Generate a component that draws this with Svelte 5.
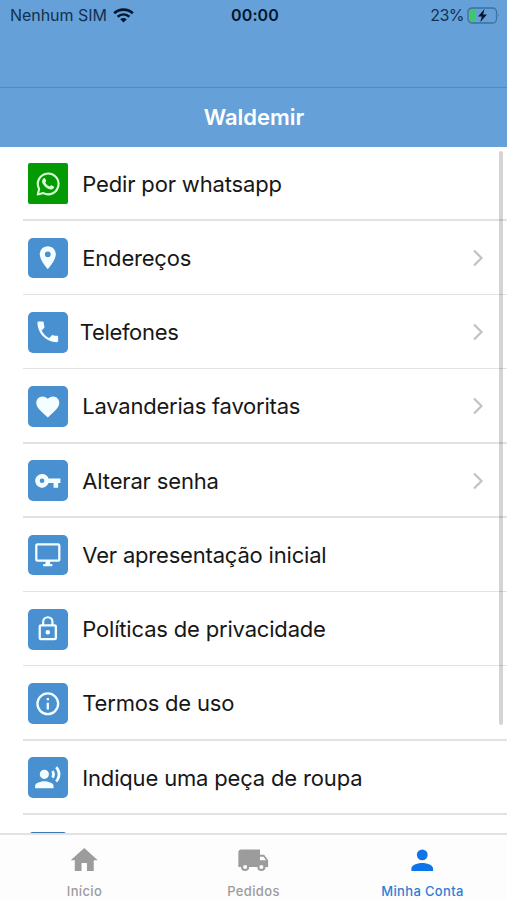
<script>
  const rows = [
    { icon: 'whatsapp', label: 'Pedir por whatsapp', spacing: -0.16 },
    { icon: 'place', label: 'Endereços', link: true, spacing: -0.2 },
    { icon: 'phone', label: 'Telefones', link: true, spacing: -0.33, shift: -2.5 },
    { icon: 'heart', label: 'Lavanderias favoritas', link: true, spacing: -0.23 },
    { icon: 'key', label: 'Alterar senha', link: true, spacing: -0.16 },
    { icon: 'monitor', label: 'Ver apresentação inicial', spacing: -0.19 },
    { icon: 'lock', label: 'Políticas de privacidade', spacing: -0.18 },
    { icon: 'info', label: 'Termos de uso', spacing: -0.2 },
    { icon: 'voice', label: 'Indique uma peça de roupa', spacing: -0.17 },
    { icon: 'blank', label: '', spacing: 0 }
  ];
  const paths = {
    place: 'M12 2C8.13 2 5 5.13 5 9c0 5.25 7 13 7 13s7-7.75 7-13c0-3.87-3.13-7-7-7zm0 9.5a2.5 2.5 0 1 1 0-5 2.5 2.5 0 0 1 0 5z',
    phone: 'M6.62 10.79c1.44 2.83 3.76 5.14 6.59 6.59l2.2-2.2c.27-.27.67-.36 1.02-.24 1.12.37 2.33.57 3.57.57.55 0 1 .45 1 1V20c0 .55-.45 1-1 1C10.61 21 3 13.39 3 4c0-.55.45-1 1-1h3.5c.55 0 1 .45 1 1 0 1.25.2 2.45.57 3.57.11.35.03.74-.25 1.02l-2.2 2.2z',
    heart: 'M12 21.35l-1.45-1.32C5.4 15.36 2 12.28 2 8.5 2 5.42 4.42 3 7.5 3c1.74 0 3.41.81 4.5 2.09C13.09 3.81 14.76 3 16.5 3 19.58 3 22 5.42 22 8.5c0 3.78-3.4 6.86-8.55 11.54L12 21.35z',
    key: 'M12.65 10A5.99 5.99 0 0 0 7 6a6 6 0 1 0 5.65 8H17v4h4v-4h2v-4H12.65zM7 14a2 2 0 1 1 0-4 2 2 0 0 1 0 4z',
    monitor: 'M21 2H3c-1.1 0-2 .9-2 2v12c0 1.1.9 2 2 2h7v2H8v2h8v-2h-2v-2h7c1.1 0 2-.9 2-2V4c0-1.1-.9-2-2-2zm0 14H3V4h18v12z',
    lock: 'M18 8h-1V6A5 5 0 0 0 7 6v2H6a2 2 0 0 0-2 2v10a2 2 0 0 0 2 2h12a2 2 0 0 0 2-2V10a2 2 0 0 0-2-2zM8.9 6a3.1 3.1 0 0 1 6.2 0v2H8.9V6zM18 20H6V10h12v10zm-6-3a2 2 0 1 0 0-4 2 2 0 0 0 0 4z',
    info: 'M11 17h2v-6h-2v6zm1-15a10 10 0 1 0 0 20 10 10 0 0 0 0-20zm0 18a8 8 0 1 1 0-16 8 8 0 0 1 0 16zM11 9h2V7h-2v2z',
    voice: 'M9 5a4 4 0 1 0 0 8 4 4 0 0 0 0-8zm0 10c-2.67 0-8 1.34-8 4v2h16v-2c0-2.66-5.33-4-8-4zm7.76-9.64l-1.68 1.69c.84 1.18.84 2.71 0 3.89l1.68 1.69c2.02-2.02 2.02-5.07 0-7.27zM20.07 2l-1.63 1.63c2.77 3.02 2.77 7.56 0 10.74L20.07 16c3.9-3.89 3.91-9.95 0-14z',
    home: 'M10 20v-6h4v6h5v-8h3L12 3 2 12h3v8z',
    truck: 'M17 8V4H3c-1.1 0-2 .9-2 2v11h2a3 3 0 0 0 6 0h6a3 3 0 0 0 6 0h2v-5l-3-4h-3zM6 18.5a1.5 1.5 0 1 1 0-3 1.5 1.5 0 0 1 0 3zm13.5-9l1.96 2.5H17V9.5h2.5zM18 18.5a1.5 1.5 0 1 1 0-3 1.5 1.5 0 0 1 0 3z',
    person: 'M12 12a4 4 0 1 0 0-8 4 4 0 0 0 0 8zm0 2c-2.67 0-8 1.34-8 4v2h16v-2c0-2.66-5.33-4-8-4z'
  };
  const tabs = [
    { icon: 'home', label: 'Início' },
    { icon: 'truck', label: 'Pedidos' },
    { icon: 'person', label: 'Minha Conta', active: true }
  ];
</script>

<div class="screen">
  <header>
    <div class="status">
      <div class="carrier">
        <span>Nenhum SIM</span>
        <svg width="21" height="15" viewBox="0 0 21 15" fill="none" stroke="#04152b">
          <path d="M1.200 5.200C6.500 .4 14.500 .4 19.800 5.200" stroke-width="2.700" />
          <path d="M4.600 8.700c3.500-3 8.300-3 11.800 0" stroke-width="2.500" />
          <path d="M7.200 11.300q3.300-2.600 6.600 0L10.500 14.600z" fill="#04152b" stroke="none" />
        </svg>
      </div>
      <b>00:00</b>
      <div class="battery">
        <span>23%</span>
        <svg width="33" height="17" viewBox="0 0 33 17">
          <rect x="1" y="1" width="28.500" height="15" rx="4" fill="none" stroke="#3d6f9f" stroke-width="1.300" />
          <path d="M4.500 2.800H8.500V14.200H4.500Q2.600 14.200 2.600 12.300V4.700Q2.600 2.800 4.500 2.800z" fill="#43c56d" />
          <path d="M17.500 2L11 9.500h3.800L13.300 15l6.700-7.500h-3.900z" fill="#04152b" />
          <path d="M31 6.300q1.500 2.200 0 4.400z" fill="#3d6f9f" />
        </svg>
      </div>
    </div>
    <h1>Waldemir</h1>
  </header>

  <main>
    {#each rows as row}
      <div class="row">
        <div class="tile {row.icon}">
          {#if row.icon === 'whatsapp'}
            <svg width="28" height="28" viewBox="0 0 24 24">
              <path d="M3.200 21l1.200-4.700A8.900 8.900 0 1 1 8 19.800z" fill="none" stroke="#d9ffd5" stroke-width="1.800" stroke-linejoin="round" />
              <path d="M8.200 7.200c.4-.5 1.100-.4 1.300 0l.9 2c.1.300 0 .6-.8 1.500.9 1.700 2 2.700 3.900 3.500.9-1.100 1.100-1.300 1.500-1.100l2 1c.4.200.4.400.2 1-.4 1.300-2 1.900-3.200 1.600-3.200-.8-5.300-2.700-6.700-5.300-.9-1.600-.4-3.200.9-4.200z" fill="#d9ffd5" />
            </svg>
          {:else if paths[row.icon]}
            <svg width="27.600" height="27.600" viewBox="0 0 24 24"><path d={paths[row.icon]} /></svg>
          {/if}
        </div>
        <div class="content">
          <span class="label" style="letter-spacing: {row.spacing}px; margin-left: {row.shift ?? 0}px">{row.label}</span>
          {#if row.link}
            <svg class="chevron" width="12" height="18" viewBox="0 0 12 18"><path d="M2 1.500l7.500 7.500L2 16.500" /></svg>
          {/if}
        </div>
      </div>
    {/each}
    <i class="scrollbar"></i>
  </main>

  <nav>
    {#each tabs as tab}
      <div class="tab" class:active={tab.active}>
        <svg width="32.500" height="32.500" viewBox="0 0 24 24"><path d={paths[tab.icon]} /></svg>
        <span>{tab.label}</span>
      </div>
    {/each}
  </nav>
</div>

<style>
  :global(body) { margin: 0; }
  .screen {
    width: 507px;
    height: 900px;
    display: flex;
    flex-direction: column;
    overflow: hidden;
    background: #fff;
    font-family: Inter, "Liberation Sans", sans-serif;
  }
  header {
    height: 146.600px;
    flex: none;
    background: #65a1d8;
  }
  .status {
    box-sizing: border-box;
    height: 88px;
    border-bottom: 1px solid #5389bd;
    display: grid;
    grid-template-columns: 1fr auto 1fr;
    align-items: start;
    padding: 5px 7px 0 10px;
    font-size: 16px;
    line-height: 20px;
    color: #12304f;
  }
  .status b { font-size: 16px; font-weight: 600; color: #04152b; letter-spacing: .1px; }
  .carrier, .battery { display: flex; align-items: center; }
  .carrier { gap: 6px; letter-spacing: -.05px; }
  .battery { justify-content: flex-end; gap: 3px; letter-spacing: -.5px; }
  h1 {
    margin: 0;
    height: 58.600px;
    line-height: 58.600px;
    text-align: center;
    color: #fff;
    font-size: 22px;
    font-weight: 600;
    text-indent: 1px;
  }
  main {
    position: relative;
    height: 687px;
    flex: none;
    overflow: hidden;
  }
  .row {
    height: 74.250px;
    display: flex;
    align-items: center;
    padding-left: 22.500px;
  }
  .tile {
    width: 40.800px;
    height: 40.800px;
    margin-left: 5px;
    border-radius: 5px;
    flex: none;
    display: grid;
    place-items: center;
    background: #4990d1;
    fill: #f4fdff;
  }
  .tile.whatsapp { background: #049a04; border-radius: 2px; }
  .tile.blank { background: #3f77b3; }
  .content {
    flex: 1;
    height: 100%;
    box-sizing: border-box;
    display: flex;
    align-items: center;
    justify-content: space-between;
    padding: 0 23px 0 14px;
    position: relative;
  }
  .content::after {
    content: "";
    position: absolute;
    left: -45.800px;
    right: 0;
    bottom: 0;
    height: 1.500px;
    background: #e2e2e3;
  }
  .label {
    font-size: 22px;
    line-height: 30px;
    color: #171717;
    white-space: nowrap;
  }
  .chevron { fill: none; stroke: #c2c2c4; stroke-width: 2.200; }
  .scrollbar {
    position: absolute;
    top: 4px;
    right: 4px;
    width: 4px;
    height: 574px;
    border-radius: 2px;
    background: rgba(0, 0, 0, .17);
  }
  nav {
    flex: 1;
    display: flex;
    background: #fdfdfd;
    border-top: 2px solid #e2e2e3;
    margin-top: -.400px;
    position: relative;
  }
  .tab {
    flex: 1;
    display: flex;
    flex-direction: column;
    align-items: center;
    padding-top: 9px;
    color: #9c9c9c;
    fill: #9c9c9c;
    font-size: 13px;
    font-weight: 500;
  }
  .tab svg { flex: none; }
  .tab span { line-height: 16px; margin-top: 6.300px; letter-spacing: .35px; }
  .tab.active { color: #2d7fd6; fill: #0d74ea; }
</style>
